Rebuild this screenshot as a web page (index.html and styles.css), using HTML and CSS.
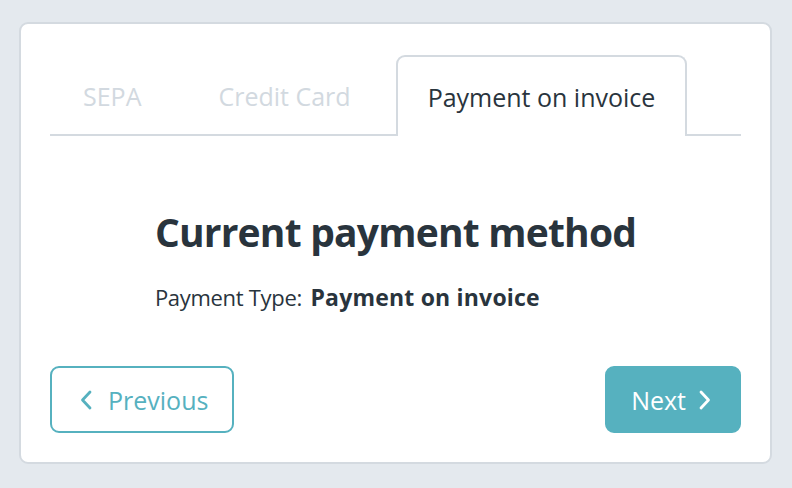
FILE: index.html
```html
<!DOCTYPE html>
<html lang="en">
<head>
<meta charset="utf-8">
<title>Payment method</title>
<link rel="stylesheet" href="styles.css">
</head>
<body>
<div class="card">
  <ul class="tabs">
    <li class="tab">SEPA</li>
    <li class="tab">Credit Card</li>
    <li class="tab active">Payment on invoice</li>
  </ul>
  <div class="content">
    <div class="summary">
      <h1 class="title">Current payment method</h1>
      <p class="type">Payment Type: <strong>Payment on invoice</strong></p>
    </div>
  </div>
  <div class="actions">
    <button class="btn btn-outline" type="button">
      <svg class="chev" viewBox="0 0 12 20" width="12" height="20"><polyline points="10,2 2.5,10 10,18" fill="none" stroke="currentColor" stroke-width="2.8" stroke-linecap="round" stroke-linejoin="round"/></svg>
      <span>Previous</span>
    </button>
    <button class="btn btn-primary" type="button">
      <span>Next</span>
      <svg class="chev" viewBox="0 0 12 20" width="12" height="20"><polyline points="2,2 9.5,10 2,18" fill="none" stroke="currentColor" stroke-width="2.8" stroke-linecap="round" stroke-linejoin="round"/></svg>
    </button>
  </div>
</div>
</body>
</html>
```

FILE: styles.css
```css
* { box-sizing: border-box; }
html, body { margin: 0; padding: 0; }
body {
  background: #e4e9ee;
  font-family: "Open Sans", "Lato", sans-serif;
  color: #29343d;
  padding: 22px 20px 24px 19px;
  height: 488px;
}
.card {
  background: #fff;
  border: 2px solid #d4dae0;
  border-radius: 9px;
  height: 442px;
  width: 753px;
  padding: 31px 29px 29px 29px;
  display: flex;
  flex-direction: column;
}
.tabs {
  list-style: none;
  margin: 0;
  padding: 0;
  display: flex;
  gap: 13px;
  border-bottom: 2px solid #d4dae0;
  height: 81px;
  flex: none;
}
.tab {
  padding: 0 30px;
  font-size: 25px;
  color: #d2d9e0;
  display: flex;
  align-items: center;
  height: 81px;
  border: 2px solid transparent;
  border-bottom: none;
  padding-bottom: 2px;
}
.tab:first-child { padding-left: 31px; }
.tab.active {
  color: #29343d;
  background: #fff;
  border-color: #d4dae0;
  border-radius: 9px 9px 0 0;
  margin-bottom: -2px;
  height: 81px;
  padding-bottom: 0;
}
.content {
  flex: 1;
  display: flex;
  justify-content: center;
  padding-top: 72px;
}
.summary { text-align: left; }
.title {
  margin: 0;
  font-size: 39px;
  letter-spacing: -0.8px;
  font-weight: 700;
  line-height: 48px;
}
.type {
  margin: 26px 0 0 0;
  font-size: 22px;
  letter-spacing: -0.3px;
  line-height: 30px;
}
.type strong { font-weight: 700; font-size: 23px; letter-spacing: 0.2px; margin-left: 3px; }
.actions {
  display: flex;
  justify-content: space-between;
  align-items: center;
  flex: none;
}
.btn {
  font-family: inherit;
  font-size: 25px;
  height: 67px;
  border-radius: 9px;
  display: flex;
  align-items: center;
  cursor: pointer;
}
.btn-outline {
  background: #fff;
  border: 2px solid #56b1bf;
  color: #56b1bf;
  padding: 0 24px 0 28px;
  gap: 16px;
}
.btn-primary {
  background: #56b1bf;
  border: 2px solid #56b1bf;
  color: #fff;
  padding: 0 28px 0 24px;
  gap: 13px;
}
.chev { display: block; }
```
